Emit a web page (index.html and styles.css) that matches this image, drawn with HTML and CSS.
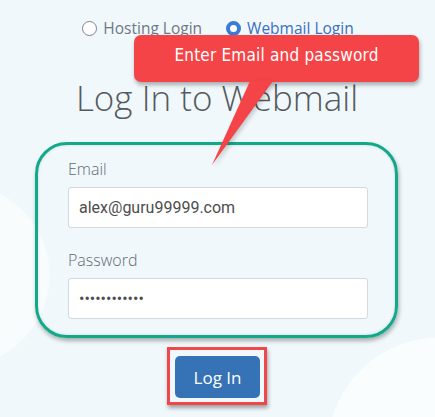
FILE: index.html
```html
<!DOCTYPE html>
<html lang="en">
<head>
  <meta charset="UTF-8">
  <title>Log In to Webmail</title>
  <link rel="stylesheet" href="styles.css">
</head>
<body>
  <div class="page">
    <div class="login-type">
      <label class="opt"><input type="radio" name="type"> Hosting Login</label>
      <label class="opt active"><input type="radio" name="type" checked> Webmail Login</label>
    </div>

    <h1>Log In to Webmail</h1>

    <form class="frame">
      <label class="field-label" for="email">Email</label>
      <input class="field" id="email" type="text" value="alex@guru99999.com">
      <label class="field-label pw" for="pw">Password</label>
      <input class="field" id="pw" type="password" value="guru99999abc">
    </form>

    <div class="btn-mark">
      <button type="button" class="btn">Log In</button>
    </div>

    <div class="callout">
      Enter Email and password
      <svg class="tail" width="150" height="90" viewBox="0 0 150 90">
        <polygon points="116,0 139,0 78,84" fill="#f44447"/>
      </svg>
    </div>
  </div>
</body>
</html>
```

FILE: styles.css
```css
body {
  margin:0; height:417px; overflow:hidden;
  font-family:"Open Sans",Arial,sans-serif;
  background:
    radial-gradient(circle at 440px 450px, #fafdfe 112px, transparent 113px),
    radial-gradient(ellipse 100px 95px at -50px 275px, #f8fcfd 99%, transparent 100%),
    #f0f8fb;
}
.page { position:relative; display:flex; flex-direction:column; align-items:center; padding-top:18px; }

.login-type { display:flex; gap:24px; height:20px; align-items:center; margin-left:1px; }
.opt { display:flex; align-items:center; gap:6px; font-size:15.5px; color:#6f7782; font-weight:400; }
.opt.active { color:#3b6fc2; }
.opt input { appearance:none; margin:0; width:15px; height:15px; border:1.5px solid #7c8491; border-radius:50%; background:#fff; box-sizing:border-box; }
.opt input:checked { border:4px solid #3a7bd8; }

h1 { margin:37px 0 0; font-size:35px; line-height:46px; font-weight:300; color:#555a60; margin-left:-1px; }

.frame { margin-top:21px; width:363px; box-sizing:border-box; padding:13px 27px 16px 30px; border:3px solid #12a98a; border-radius:32px; box-shadow:1px 3px 4px rgba(0,0,0,.3), inset 0 0 3px rgba(0,0,0,.15); display:flex; flex-direction:column; margin-left:-2px; }
.field-label { font-size:16px; line-height:22px; font-weight:300; color:#636b73; }
.field-label.pw { margin-top:21px; }
.field { margin-top:7px; height:41px; box-sizing:border-box; border:1px solid #d3d9de; border-radius:3px; background:#fff; padding:0 10px; font-family:Roboto,Arial,sans-serif; font-size:16px; color:#4d4d4d; }

.btn-mark { margin-top:9px; border:3px solid #f2474a; padding:6px 4px 4px 5px; box-shadow:1px 3px 4px rgba(0,0,0,.35); margin-left:-1px; }
.btn { display:block; width:85px; height:42px; border:none; border-radius:5px; background:#3572b6; color:#fff; font-family:"Open Sans",Arial,sans-serif; font-size:17px; }

.callout { position:absolute; left:134px; top:35px; width:285px; height:47px; box-sizing:border-box; padding-top:10px; background:#f44447; border-radius:7px; box-shadow:1px 3px 4px rgba(0,0,0,.3); color:#fff; text-align:center; font-family:"DejaVu Sans Condensed","DejaVu Sans",sans-serif; font-size:17px; letter-spacing:.2px; }
.tail { position:absolute; left:0; top:46px; filter:drop-shadow(2px 2px 2px rgba(0,0,0,.2)); }
```
